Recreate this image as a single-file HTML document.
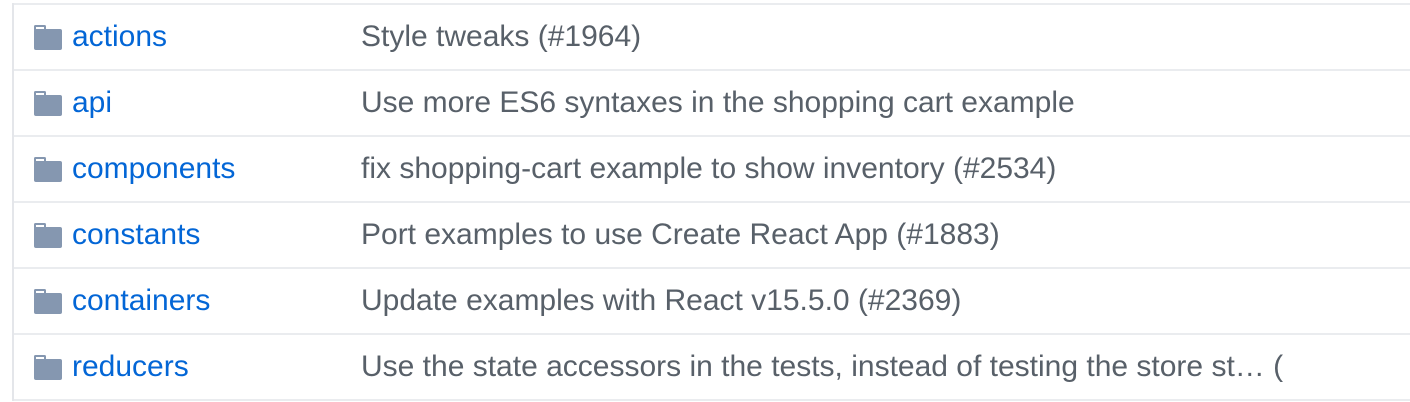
<!DOCTYPE html>
<html><head><style>
body{margin:0;background:#fff;width:1410px;height:402px;overflow:hidden;font-family:"Liberation Sans",sans-serif;}
.wrap{position:absolute;left:12px;top:3px;width:1420px;border-left:2px solid #e4e6ea;}
.row{height:64px;border-top:2px solid #eaecef;position:relative;}
.row:last-child{border-bottom:2px solid #eaecef;}
svg{position:absolute;left:20px;top:20px;}
.n{position:absolute;left:58px;top:15px;font-size:30px;color:#0366d6;}
.m{position:absolute;left:347px;top:15px;font-size:30px;color:#586069;white-space:nowrap;}
</style></head><body>
<div class="wrap">
<div class="row"><svg width="28" height="25" viewBox="0 0 28 25"><rect x="0" y="4" width="28" height="21" rx="2" fill="#8597b0"/><rect x="0" y="0" width="12" height="6" rx="1.5" fill="#8597b0"/><rect x="2" y="2" width="8" height="2" fill="#fff"/></svg><span class="n">actions</span><span class="m">Style tweaks (#1964)</span></div>
<div class="row"><svg width="28" height="25" viewBox="0 0 28 25"><rect x="0" y="4" width="28" height="21" rx="2" fill="#8597b0"/><rect x="0" y="0" width="12" height="6" rx="1.5" fill="#8597b0"/><rect x="2" y="2" width="8" height="2" fill="#fff"/></svg><span class="n">api</span><span class="m">Use more ES6 syntaxes in the shopping cart example</span></div>
<div class="row"><svg width="28" height="25" viewBox="0 0 28 25"><rect x="0" y="4" width="28" height="21" rx="2" fill="#8597b0"/><rect x="0" y="0" width="12" height="6" rx="1.5" fill="#8597b0"/><rect x="2" y="2" width="8" height="2" fill="#fff"/></svg><span class="n">components</span><span class="m">fix shopping-cart example to show inventory (#2534)</span></div>
<div class="row"><svg width="28" height="25" viewBox="0 0 28 25"><rect x="0" y="4" width="28" height="21" rx="2" fill="#8597b0"/><rect x="0" y="0" width="12" height="6" rx="1.5" fill="#8597b0"/><rect x="2" y="2" width="8" height="2" fill="#fff"/></svg><span class="n">constants</span><span class="m">Port examples to use Create React App (#1883)</span></div>
<div class="row"><svg width="28" height="25" viewBox="0 0 28 25"><rect x="0" y="4" width="28" height="21" rx="2" fill="#8597b0"/><rect x="0" y="0" width="12" height="6" rx="1.5" fill="#8597b0"/><rect x="2" y="2" width="8" height="2" fill="#fff"/></svg><span class="n">containers</span><span class="m">Update examples with React v15.5.0 (#2369)</span></div>
<div class="row"><svg width="28" height="25" viewBox="0 0 28 25"><rect x="0" y="4" width="28" height="21" rx="2" fill="#8597b0"/><rect x="0" y="0" width="12" height="6" rx="1.5" fill="#8597b0"/><rect x="2" y="2" width="8" height="2" fill="#fff"/></svg><span class="n">reducers</span><span class="m">Use the state accessors in the tests, instead of testing the store st… (</span></div>
</div>
</body></html>
